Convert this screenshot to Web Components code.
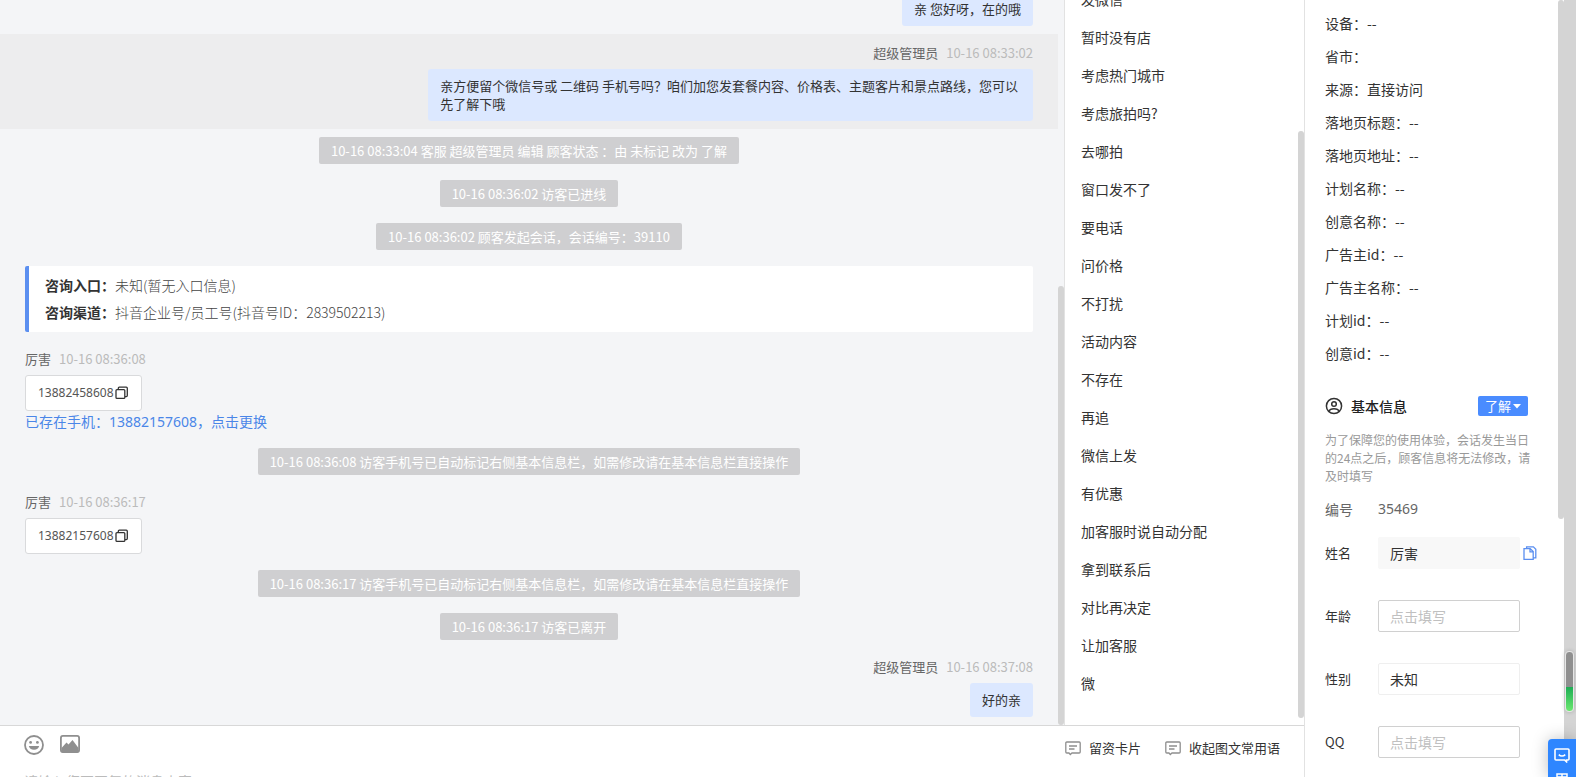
<!DOCTYPE html>
<html lang="zh-CN">
<head>
<meta charset="utf-8">
<title>客服工作台</title>
<style>
  html, body { height: 100%; margin: 0; }
  body {
    overflow: hidden;
    background: #ffffff;
    color: #333333;
    font: 14px/22px "Noto Sans CJK SC", "Microsoft YaHei", sans-serif;
  }
</style>
</head>
<body>
<desk-layout>
  <chat-log slot="chat">
    <chat-message side="right">亲 您好呀，在的哦</chat-message>
    <chat-message side="right" name="超级管理员" time="10-16 08:33:02" active>亲方便留个微信号或 二维码 手机号吗？咱们加您发套餐内容、价格表、主题客片和景点路线，您可以先了解下哦</chat-message>
    <chat-notice>10-16 08:33:04 客服 超级管理员 编辑 顾客状态 ：由 未标记 改为 了解</chat-notice>
    <chat-notice>10-16 08:36:02 访客已进线</chat-notice>
    <chat-notice>10-16 08:36:02 顾客发起会话，会话编号：39110</chat-notice>
    <source-card>
      <source-row label="咨询入口：">未知(暂无入口信息)</source-row>
      <source-row label="咨询渠道：">抖音企业号/员工号(抖音号ID：2839502213)</source-row>
    </source-card>
    <chat-message name="厉害" time="10-16 08:36:08" copy>13882458608<a slot="extra" href="#">已存在手机：13882157608，点击更换</a></chat-message>
    <chat-notice>10-16 08:36:08 访客手机号已自动标记右侧基本信息栏，如需修改请在基本信息栏直接操作</chat-notice>
    <chat-message name="厉害" time="10-16 08:36:17" copy>13882157608</chat-message>
    <chat-notice>10-16 08:36:17 访客手机号已自动标记右侧基本信息栏，如需修改请在基本信息栏直接操作</chat-notice>
    <chat-notice>10-16 08:36:17 访客已离开</chat-notice>
    <chat-message side="right" name="超级管理员" time="10-16 08:37:08">好的亲</chat-message>
  </chat-log>
  <phrase-list slot="phrases"></phrase-list>
  <chat-composer slot="composer"></chat-composer>
  <visitor-panel slot="visitor"></visitor-panel>
</desk-layout>
<side-dock></side-dock>

<script>
const define = (name, html, setup) => {
  const template = document.createElement('template');
  template.innerHTML = html;
  customElements.define(name, class extends HTMLElement {
    connectedCallback() {
      if (this.shadowRoot) return;
      const shadow = this.attachShadow({ mode: 'open' });
      shadow.append(template.content.cloneNode(true));
      if (setup) setup(this, shadow);
    }
  });
};

define('desk-layout', `
  <style>
    :host {
      display: grid;
      grid-template-columns: minmax(0, 1fr) 240px 272px;
      grid-template-rows: minmax(0, 1fr) 52px;
      height: 100vh;
    }
    .composer { grid-column: 1 / 3; grid-row: 2; border-top: 1px solid #d8d8d8; overflow: hidden; }
    .visitor { grid-column: 3; grid-row: 1 / 3; border-left: 1px solid #e2e2e2; overflow: hidden; }
    .chat, .phrases { overflow: hidden; display: grid; min-height: 0; }
    .phrases { border-left: 1px solid #e2e2e2; }
  </style>
  <div class="chat"><slot name="chat"></slot></div>
  <div class="phrases"><slot name="phrases"></slot></div>
  <div class="composer"><slot name="composer"></slot></div>
  <div class="visitor"><slot name="visitor"></slot></div>
`);

// scrollbar rail, thumb placed by the from/to percentages
define('scroll-rail', `
  <style>
    :host { display: flex; flex-direction: column; width: 6px; flex: none; }
    .thumb { background: #d4d4d4; border-radius: 3px; }
  </style>
  <div class="before"></div><div class="thumb"></div><div class="after"></div>
`, (host, shadow) => {
  const from = Number(host.getAttribute('from'));
  const to = Number(host.getAttribute('to'));
  shadow.querySelector('.before').style.flex = `${from} 0 0`;
  shadow.querySelector('.thumb').style.flex = `${to - from} 0 0`;
  shadow.querySelector('.after').style.flex = `${100 - to} 0 0`;
});

define('chat-log', `
  <style>
    :host { display: flex; min-height: 0; background: #f4f5f7; }
    .list {
      flex: 1;
      min-width: 0;
      display: flex;
      flex-direction: column;
      justify-content: flex-end;
      overflow: hidden;
    }
  </style>
  <div class="list"><slot></slot></div>
  <scroll-rail from="39.5" to="100"></scroll-rail>
`);

define('chat-message', `
  <style>
    :host {
      display: flex;
      flex: none;
      flex-direction: column;
      align-items: flex-start;
      padding: 8px 25px;
      font-size: 13px;
    }
    :host([side="right"]) { align-items: flex-end; }
    :host([active]) { background: #ededee; }
    .head { display: flex; gap: 8px; margin-bottom: 5px; line-height: 22px; color: #666666; }
    .head[hidden] { display: none; }
    time { color: #bbbbbb; }
    .bubble {
      display: flex;
      align-items: center;
      box-sizing: border-box;
      max-width: 60%;
      padding: 8px 12px;
      border: 1px solid #d9dadc;
      border-radius: 3px;
      background: #ffffff;
      line-height: 18px;
    }
    :host([side="right"]) .bubble { border: 0; background: #dce8ff; }
    :host([copy]) .bubble { font-family: "Noto Sans", sans-serif; font-size: 12px; color: #555555; }
    button { display: flex; padding: 0; border: 0; background: none; color: #333333; cursor: pointer; }
    button[hidden] { display: none; }
    ::slotted(a) { font: 14px/21px "Noto Sans", "Noto Sans CJK SC", sans-serif; color: #4a86e8; text-decoration: none; }
  </style>
  <div class="head"><span class="name"></span><time></time></div>
  <div class="bubble">
    <span><slot></slot></span>
    <button aria-label="复制" hidden>
      <svg width="15" height="14" viewBox="0 0 15 14" fill="none" stroke="currentColor" stroke-width="1.3" aria-hidden="true">
        <rect x="2" y="3.6" width="8.8" height="8.8" rx="1"/>
        <path d="M4.300 3.400V2.200a1 1 0 0 1 1-1h7a1 1 0 0 1 1 1v7.400a1 1 0 0 1-1 1H11"/>
      </svg>
    </button>
  </div>
  <slot name="extra"></slot>
`, (host, shadow) => {
  shadow.querySelector('.head').hidden = !host.hasAttribute('name');
  shadow.querySelector('.name').textContent = host.getAttribute('name');
  shadow.querySelector('time').textContent = host.getAttribute('time');
  shadow.querySelector('button').hidden = !host.hasAttribute('copy');
});

define('chat-notice', `
  <style>
    :host { display: flex; flex: none; justify-content: center; padding: 8px 25px; }
    p {
      margin: 0;
      padding: 0 12px;
      border-radius: 2px;
      background: #cfcfd1;
      color: #ffffff;
      font-size: 13px;
      line-height: 27px;
    }
  </style>
  <p><slot></slot></p>
`);

define('source-card', `
  <style>
    :host {
      display: block;
      flex: none;
      margin: 8px 25px;
      padding: 6px 16px;
      border-left: 4px solid #5b8ff0;
      border-radius: 2px;
      background: #ffffff;
    }
  </style>
  <slot></slot>
`);

define('source-row', `
  <style>
    :host { display: block; line-height: 27px; font-weight: 300; color: #444444; }
    b { font-weight: 700; color: #333333; }
  </style>
  <b></b><slot></slot>
`, (host, shadow) => {
  shadow.querySelector('b').textContent = host.getAttribute('label');
});

const PHRASES = [
  '发微信', '暂时没有店', '考虑热门城市', '考虑旅拍吗?', '去哪拍', '窗口发不了', '要电话',
  '问价格', '不打扰', '活动内容', '不存在', '再追', '微信上发', '有优惠',
  '加客服时说自动分配', '拿到联系后', '对比再决定', '让加客服', '微',
];

define('phrase-list', `
  <style>
    :host { display: flex; min-height: 0; }
    ul {
      flex: 1;
      display: flex;
      flex-direction: column;
      justify-content: flex-end;
      margin: 0;
      padding: 0 16px 23px;
      list-style: none;
      overflow: hidden;
    }
    li { flex: none; line-height: 38px; }
  </style>
  <ul></ul>
  <scroll-rail from="18" to="99"></scroll-rail>
`, (host, shadow) => {
  const list = shadow.querySelector('ul');
  for (const text of PHRASES) {
    const li = document.createElement('li');
    li.textContent = text;
    list.append(li);
  }
});

define('chat-composer', `
  <style>
    :host { display: flex; flex-direction: column; }
    .bar { display: flex; align-items: center; height: 44px; padding: 0 24px; gap: 16px; flex: none; }
    .tools { display: flex; flex: 1; gap: 16px; padding-bottom: 6px; }
    .links { display: flex; gap: 24px; }
    button {
      display: flex;
      align-items: center;
      gap: 8px;
      padding: 0;
      border: 0;
      background: none;
      color: #333333;
      font: inherit;
      font-size: 13px;
      cursor: pointer;
    }
    svg { display: block; color: #8f8f8f; }
    textarea {
      flex: none;
      height: 80px;
      padding: 0 24px;
      border: 0;
      resize: none;
      outline: 0;
      font: inherit;
    }
    textarea::placeholder { color: #bbbbbb; }
  </style>
  <div class="bar">
    <div class="tools">
      <button aria-label="表情">
        <svg width="20" height="20" viewBox="0 0 20 20" aria-hidden="true">
          <circle cx="10" cy="10" r="9" fill="none" stroke="currentColor" stroke-width="1.8"/>
          <circle cx="6.6" cy="7.4" r="1.4" fill="currentColor"/>
          <circle cx="13.4" cy="7.4" r="1.4" fill="currentColor"/>
          <path d="M4.8 11h10.4a5.3 4.6 0 0 1-10.4 0z" fill="currentColor"/>
        </svg>
      </button>
      <button aria-label="图片">
        <svg width="20" height="20" viewBox="0 0 20 20" aria-hidden="true">
          <rect x="0.9" y="0.9" width="18.2" height="16.2" rx="2" fill="none" stroke="currentColor" stroke-width="1.8"/>
          <path d="M1.500 13 6.500 7.400l2 2 4-4.400 6 8V16a1.500 1.500 0 0 1-1.500 1.500H3A1.500 1.500 0 0 1 1.500 16z" fill="currentColor"/>
        </svg>
      </button>
    </div>
    <div class="links">
      <button>
        <svg width="16" height="16" viewBox="0 0 16 16" fill="none" stroke="currentColor" stroke-width="1.3" aria-hidden="true">
          <path d="M1.800 2h12.400a1 1 0 0 1 1 1v9a1 1 0 0 1-1 1H7l-1.700 1.500L4 13H1.800a1 1 0 0 1-1-1V3a1 1 0 0 1 1-1zM4 6h8M4 9h5.500"/>
        </svg>
        留资卡片
      </button>
      <button>
        <svg width="16" height="16" viewBox="0 0 16 16" fill="none" stroke="currentColor" stroke-width="1.3" aria-hidden="true">
          <path d="M1.800 2h12.400a1 1 0 0 1 1 1v9a1 1 0 0 1-1 1H7l-1.700 1.500L4 13H1.800a1 1 0 0 1-1-1V3a1 1 0 0 1 1-1zM4 6h8M4 9h5.500"/>
        </svg>
        收起图文常用语
      </button>
    </div>
  </div>
  <textarea aria-label="消息内容" placeholder="请输入您要回复的消息内容"></textarea>
`);

define('form-row', `
  <style>
    :host { display: flex; align-items: center; height: 32px; margin-bottom: 31px; }
    label { width: 53px; flex: none; font-size: 13px; }
    input {
      box-sizing: border-box;
      width: 142px;
      height: 32px;
      padding: 0 11px;
      border: 1px solid #d0d0d0;
      border-radius: 2px;
      background: #ffffff;
      color: #333333;
      font: inherit;
      outline: 0;
    }
    input::placeholder { color: #c0c0c0; }
    :host([filled]) input { border-color: #f8f8f8; background: #f8f8f8; }
    :host([faint]) input { border-color: #efefef; }
    ::slotted(button) { margin: 0 0 0 3px; padding: 0; border: 0; background: none; color: #5b8ff0; cursor: pointer; }
  </style>
  <label for="field"></label>
  <input id="field" type="text">
  <slot></slot>
`, (host, shadow) => {
  const input = shadow.querySelector('input');
  shadow.querySelector('label').textContent = host.getAttribute('label');
  input.value = host.getAttribute('value') ?? '';
  input.placeholder = host.getAttribute('placeholder') ?? '';
});

const VISIT = [
  ['设备', '--'], ['省市', ''], ['来源', '直接访问'], ['落地页标题', '--'], ['落地页地址', '--'],
  ['计划名称', '--'], ['创意名称', '--'], ['广告主id', '--'], ['广告主名称', '--'],
  ['计划id', '--'], ['创意id', '--'],
];

define('visitor-panel', `
  <style>
    :host { display: flex; height: 100%; }
    .body { flex: 1; min-width: 0; padding: 7px 0 0 20px; overflow: hidden; }
    .visit { margin: 0; padding: 0; list-style: none; line-height: 33px; }
    header { display: flex; align-items: center; width: 203px; margin-top: 25px; gap: 8px; }
    h2 { flex: 1; margin: 0; font-size: 14px; line-height: 22px; font-weight: 500; color: #222222; }
    header button {
      display: flex;
      align-items: center;
      gap: 2px;
      height: 20px;
      padding: 0 7px;
      border: 0;
      border-radius: 2px;
      background: #4a8cff;
      color: #ffffff;
      font: inherit;
      font-size: 13px;
      line-height: 20px;
    }
    .tip { width: 208px; margin: 14px 0 13px; font-size: 12px; line-height: 18px; color: #999999; }
    dl { display: flex; margin: 0 0 17px; line-height: 22px; color: #666666; }
    dt { width: 53px; }
    dd { margin: 0; font-family: "Noto Sans", sans-serif; }
    /* page-level rail behind the panel */
    .page { display: flex; width: 12px; background: #d4d4d4; }
  </style>
  <div class="body">
    <ul class="visit"></ul>
    <header>
      <svg width="18" height="18" viewBox="0 0 18 18" fill="none" stroke="#333333" stroke-width="1.5" aria-hidden="true">
        <circle cx="9" cy="9" r="7.600"/>
        <circle cx="9" cy="7" r="2.300"/>
        <path d="M3.900 14.500c.8-2.200 2.600-2.800 5.100-2.800s4.300.6 5.100 2.800"/>
      </svg>
      <h2>基本信息</h2>
      <button>了解
        <svg width="8" height="5" viewBox="0 0 8 5" aria-hidden="true"><path d="M0 0h8L4 4.500z" fill="#ffffff"/></svg>
      </button>
    </header>
    <p class="tip">为了保障您的使用体验，会话发生当日的24点之后，顾客信息将无法修改，请及时填写</p>
    <dl><dt>编号</dt><dd>35469</dd></dl>
    <form-row label="姓名" value="厉害" filled>
      <button aria-label="复制姓名">
        <svg width="14" height="14" viewBox="0 0 14 14" fill="none" stroke="currentColor" stroke-width="1.300" aria-hidden="true" style="display: block">
          <path d="M1 2.600h6.200l3 3v7.800H1zM7 2.600v3.200h3.200M3.600 2.600V.8h6.800l2.400 2.400v8.600h-2.600"/>
        </svg>
      </button>
    </form-row>
    <form-row label="年龄" placeholder="点击填写"></form-row>
    <form-row label="性别" value="未知" faint></form-row>
    <form-row label="QQ" placeholder="点击填写"></form-row>
  </div>
  <scroll-rail from="-1" to="66.5"></scroll-rail>
  <div class="page"></div>
`, (host, shadow) => {
  const list = shadow.querySelector('.visit');
  for (const [key, value] of VISIT) {
    const li = document.createElement('li');
    li.textContent = `${key}：${value}`;
    list.append(li);
  }
});

// widgets floating over the right edge of the window
define('side-dock', `
  <style>
    :host { display: block; }
    .level {
      position: fixed;
      right: 2px;
      bottom: 65px;
      box-sizing: border-box;
      width: 9px;
      height: 61px;
      border: 1px solid #e6e6e6;
      border-radius: 4px;
      background: linear-gradient(#8f8f8f 0 60%, #1fae55 60%, #6be86f);
      box-shadow: 0 0 4px rgba(0, 0, 0, 0.2);
    }
    .dock {
      position: fixed;
      right: 0;
      bottom: 0;
      display: flex;
      flex-direction: column;
      align-items: center;
      gap: 10px;
      box-sizing: border-box;
      width: 28px;
      height: 38px;
      padding-top: 8px;
      overflow: hidden;
      border-radius: 4px 0 0 0;
      background: #2e86ff;
    }
    .shade { position: fixed; right: 0; bottom: 0; width: 28px; height: 38px; border-radius: 4px 0 0 0; box-shadow: 0 0 16px rgba(0, 0, 0, 0.25); }
    button { display: block; padding: 0; border: 0; background: none; }
    svg { display: block; }
  </style>
  <div class="level"></div>
  <div class="shade"></div>
  <div class="dock">
    <button aria-label="在线咨询">
      <svg width="16" height="16" viewBox="0 0 16 16" fill="none" stroke="#ffffff" stroke-width="1.600" aria-hidden="true">
        <path d="M2 2h12a1 1 0 0 1 1 1v9a1 1 0 0 1-1 1h-1.500v1.800L10.500 13H2a1 1 0 0 1-1-1V3a1 1 0 0 1 1-1z"/>
        <path d="M4.800 7.600c1.800 1.900 4.600 1.900 6.400 0"/>
      </svg>
    </button>
    <button aria-label="更多应用">
      <svg width="12" height="12" viewBox="0 0 12 12" fill="none" stroke="#ffffff" stroke-width="1.500" aria-hidden="true">
        <path d="M1 1h10v10H1zM6 1v10M1 4h10"/>
      </svg>
    </button>
  </div>
`);
</script>
</body>
</html>
